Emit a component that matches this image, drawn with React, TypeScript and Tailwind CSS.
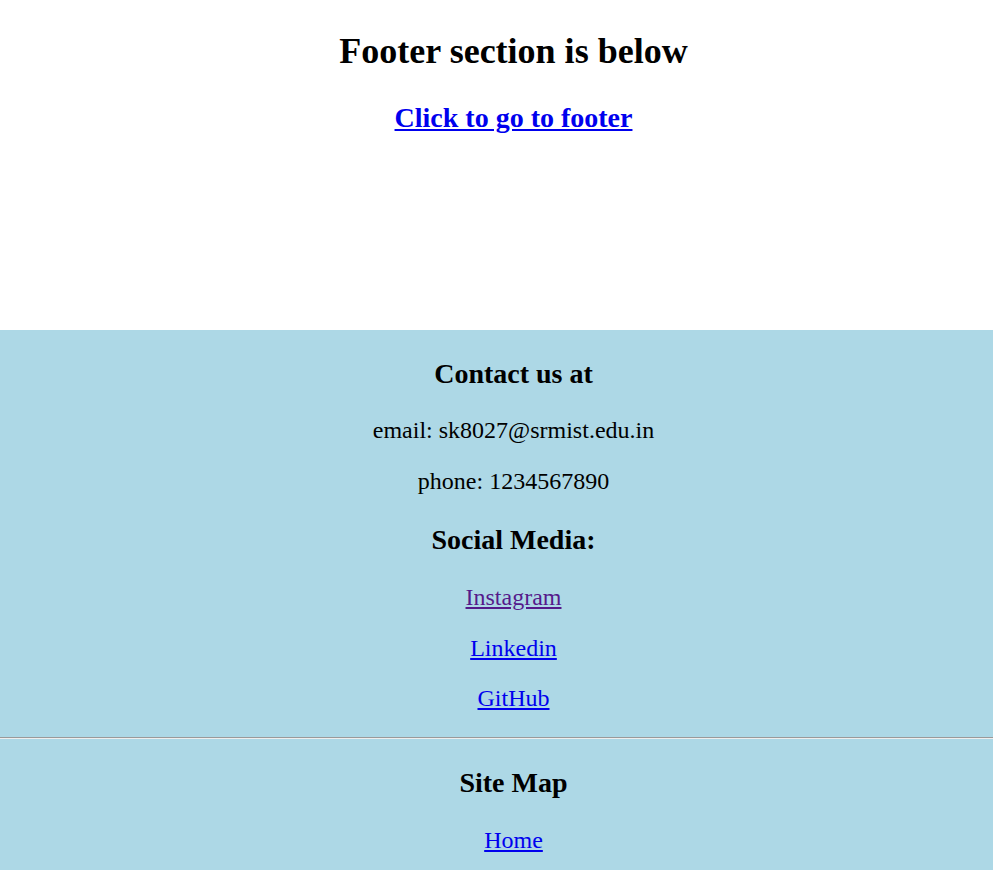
import React from "react";

export default function App() {
  return (
    <div
      className="min-h-[870px] bg-white text-black text-center"
      style={{ fontFamily: '"Liberation Serif", "Times New Roman", serif' }}
    >
      <div className="h-[330px] flex flex-col items-center pl-[34px]">
        <h1 className="mt-[31px] text-[36px] font-bold leading-[41px]">Footer section is below</h1>
        <h3 className="mt-[30px] text-[28px] font-bold leading-[32px]">
          <a href="#footer" className="text-[#0000ee] underline">Click to go to footer</a>
        </h3>
      </div>
      <footer id="footer" className="bg-[#add8e6] flex flex-col min-h-[540px]">
        <div className="flex flex-col items-center pt-[28px] pl-[34px]">
          <h3 className="text-[28px] font-bold leading-[32px]">Contact us at</h3>
          <p className="mt-[27px] text-[24px] leading-[27px]">email: sk8027@srmist.edu.in</p>
          <p className="mt-[24px] text-[24px] leading-[27px]">phone: 1234567890</p>
          <h3 className="mt-[29px] text-[28px] font-bold leading-[32px]">Social Media:</h3>
          <p className="mt-[28px] text-[24px] leading-[27px]">
            <a href="#" className="text-[#551a8b] underline">Instagram</a>
          </p>
          <p className="mt-[24px] text-[24px] leading-[27px]">
            <a href="#" className="text-[#0000ee] underline">Linkedin</a>
          </p>
          <p className="mt-[23px] text-[24px] leading-[27px]">
            <a href="#" className="text-[#0000ee] underline">GitHub</a>
          </p>
        </div>
        <div className="mt-[25px] border-t border-t-[#9a9a9a] border-b border-b-[#eeeeee]" />
        <div className="flex flex-col items-center pt-[28px] pl-[34px]">
          <h3 className="text-[28px] font-bold leading-[32px]">Site Map</h3>
          <p className="mt-[28px] text-[24px] leading-[27px]">
            <a href="#" className="text-[#0000ee] underline">Home</a>
          </p>
        </div>
      </footer>
    </div>
  );
}
